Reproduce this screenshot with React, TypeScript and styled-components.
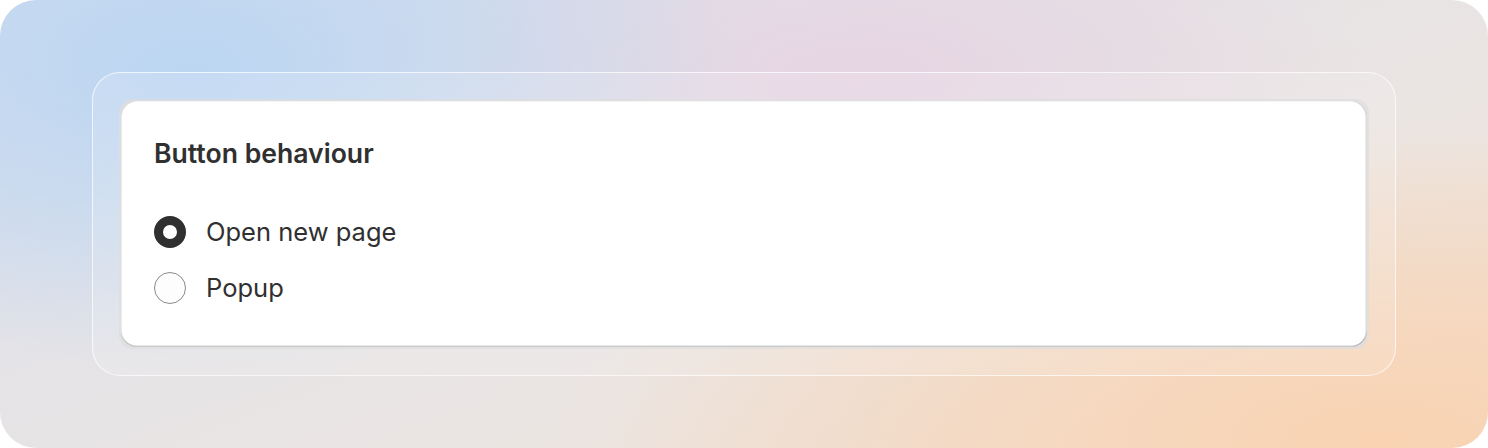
import styled, { createGlobalStyle } from 'styled-components';
import { useState } from 'react';

const GlobalStyle = createGlobalStyle`
  html, body {
    margin: 0;
    padding: 0;
    background: #ffffff;
  }
  body {
    font-family: Inter, 'Noto Sans', sans-serif;
    color: #303030;
  }
`;

type TOption = { id: string; label: string };

const options: TOption[] = [
  { id: 'page', label: 'Open new page' },
  { id: 'popup', label: 'Popup' },
];

const App = () => {
  const [selected, setSelected] = useState<string>('page');

  return (
    <>
      <GlobalStyle />
      <S.Backdrop>
        <S.Frame>
          <S.Plate>
            <S.Card>
              <S.Title>Button behaviour</S.Title>
              <S.OptionList>
                {options.map((option) => (
                  <S.Option key={option.id} onClick={() => setSelected(option.id)}>
                    <S.Radio $checked={selected === option.id} />
                    <S.Label>{option.label}</S.Label>
                  </S.Option>
                ))}
              </S.OptionList>
            </S.Card>
          </S.Plate>
        </S.Frame>
      </S.Backdrop>
    </>
  );
};

export default App;

const S = {
  Backdrop: styled.div`
    width: 1488px;
    height: 448px;
    box-sizing: border-box;
    border-radius: 36px;
    overflow: hidden;
    padding: 72px 92px;
    background:
      radial-gradient(ellipse 560px 300px at 190px 70px, rgba(188, 214, 242, 1) 0%, rgba(188, 214, 242, 0.55) 50%, rgba(188, 214, 242, 0) 100%),
      radial-gradient(ellipse 520px 220px at 860px 80px, rgba(230, 212, 226, 1) 0%, rgba(230, 212, 226, 0) 100%),
      radial-gradient(ellipse 820px 320px at 1380px 440px, rgba(249, 211, 178, 1) 0%, rgba(249, 211, 178, 0.55) 50%, rgba(249, 211, 178, 0) 100%),
      linear-gradient(160deg, #d4dcee 0%, #e4e3e7 35%, #ebe5e2 65%, #f0dfd2 100%);
  `,
  Frame: styled.div`
    height: 100%;
    box-sizing: border-box;
    padding: 26px;
    border-radius: 28px;
    border: 1.5px solid rgba(255, 255, 255, 0.7);
    background: rgba(255, 255, 255, 0.14);
  `,
  Plate: styled.div`
    height: 100%;
    box-sizing: border-box;
    padding: 2px;
    border-radius: 14px;
    background: rgba(222, 222, 222, 0.75);
  `,
  Card: styled.div`
    height: 100%;
    box-sizing: border-box;
    padding: 37px 32px 0 33px;
    border-radius: 16px;
    background: #ffffff;
    box-shadow:
      inset 0 -1.5px 0 0 rgba(0, 0, 0, 0.2),
      inset -1.5px 0 0 0 rgba(0, 0, 0, 0.14),
      inset 1px 0 0 0 rgba(0, 0, 0, 0.08),
      inset 0 1px 0 0 rgba(0, 0, 0, 0.04);
  `,
  Title: styled.h2`
    margin: 0;
    font-size: 26.6px;
    line-height: 30px;
    font-weight: 600;
    color: #303030;
  `,
  OptionList: styled.div`
    display: flex;
    flex-direction: column;
    gap: 24px;
    margin-top: 48px;
  `,
  Option: styled.label`
    display: flex;
    align-items: center;
    gap: 20px;
    cursor: pointer;
  `,
  Radio: styled.span<{ $checked: boolean }>`
    width: 32px;
    height: 32px;
    box-sizing: border-box;
    border-radius: 50%;
    flex-shrink: 0;
    border: ${({ $checked }) => ($checked ? '9.5px solid #303030' : '1.5px solid #8a8a8a')};
    background: ${({ $checked }) => ($checked ? '#ffffff' : '#fdfdfd')};
  `,
  Label: styled.span`
    font-size: 25.5px;
    line-height: 32px;
    color: #303030;
  `,
};
